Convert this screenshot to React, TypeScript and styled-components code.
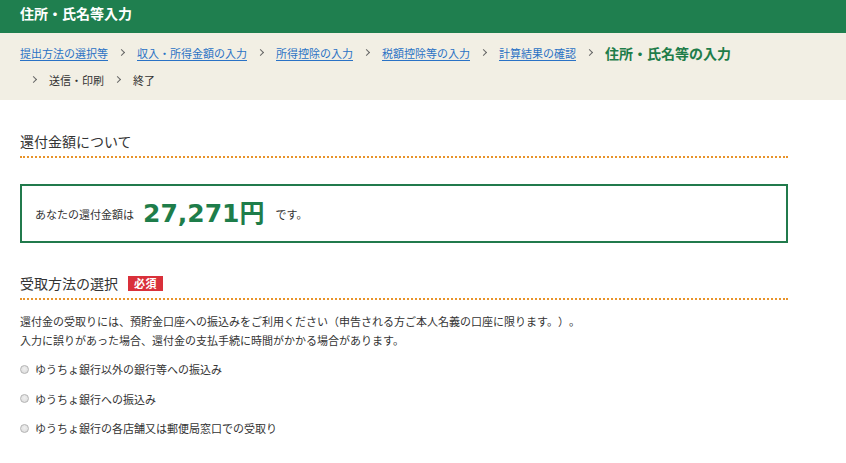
import React from "react";
import styled, { createGlobalStyle } from "styled-components";

const Global = createGlobalStyle`
  html, body { margin: 0; padding: 0; background: #fff; }
  body {
    font-family: "Noto Sans CJK JP", "Noto Sans", sans-serif;
    color: #333;
    text-spacing-trim: space-all;
  }
  * { box-sizing: border-box; }
`;

const Header = styled.header`
  height: 33px;
  background: #1f7f4f;
  padding: 3px 20px 0;
  color: #fff;
  font-size: 14px;
  font-weight: 700;
  line-height: 20px;
`;

const Crumbs = styled.nav`
  background: #f2efe4;
  padding: 6px 20px 7px;
`;

const CrumbList = styled.ol`
  list-style: none;
  margin: 0;
  padding: 0;
  width: 768px;
  display: flex;
  flex-wrap: wrap;
  align-items: center;
`;

const Crumb = styled.li<{ $first?: boolean; $current?: boolean }>`
  display: flex;
  align-items: center;
  height: 27px;
  font-size: ${(p) => (p.$current ? "14px" : "11px")};
  font-weight: ${(p) => (p.$current ? 700 : 400)};
  color: ${(p) => (p.$current ? "#1e7d4a" : "#333")};
  margin-left: ${(p) => (p.$first ? "0" : "11px")};
  &::before {
    content: "";
    display: ${(p) => (p.$first ? "none" : "block")};
    width: 4px;
    height: 4px;
    border-top: 1.6px solid #666;
    border-right: 1.6px solid #666;
    transform: rotate(45deg);
    margin-right: 13px;
  }
`;

const CrumbLink = styled.a`
  color: #2a72c5;
  text-decoration: underline;
  text-underline-offset: 2px;
`;

const Main = styled.main`
  padding: 0 20px 20px;
  width: 808px;
`;

const Heading = styled.h2<{ $top: number }>`
  margin: ${(p) => p.$top}px 0 0;
  padding-bottom: 5px;
  border-bottom: 2px dotted #e8932a;
  font-size: 14px;
  font-weight: 400;
  line-height: 20px;
  color: #333;
  display: flex;
  align-items: center;
`;

const Badge = styled.span`
  margin-left: 10px;
  background: #d9303a;
  color: #fff;
  font-size: 11px;
  font-weight: 700;
  line-height: 15px;
  height: 15px;
  padding: 0 6px;
  letter-spacing: 0.5px;
`;

const AmountBox = styled.div`
  margin-top: 26px;
  height: 59px;
  border: 2px solid #217a4c;
  padding: 0 13px;
  display: flex;
  align-items: center;
  font-size: 11px;
  color: #333;
`;

const Amount = styled.strong`
  font-family: "DejaVu Sans", "Noto Sans CJK JP", sans-serif;
  font-size: 25px;
  font-weight: 700;
  color: #1e7d4a;
  margin: 0 11px 0 9px;
  line-height: 1;
`;

const Para = styled.p`
  margin: 12px 0 0;
  font-size: 11px;
  line-height: 19px;
  color: #333;
`;

const Options = styled.div`
  margin-top: 9px;
  display: flex;
  flex-direction: column;
  gap: 9.5px;
`;

const Option = styled.label`
  display: flex;
  align-items: center;
  height: 20px;
  font-size: 11px;
  color: #333;
`;

const Radio = styled.input`
  appearance: none;
  width: 9px;
  height: 9px;
  margin: 0 6px 0 0;
  border-radius: 50%;
  border: 1px solid #b4b4b4;
  background: radial-gradient(circle at 50% 40%, #f0f0f0 0%, #d8d8d8 100%);
`;

const crumbs = [
  "提出方法の選択等",
  "収入・所得金額の入力",
  "所得控除の入力",
  "税額控除等の入力",
  "計算結果の確認",
];

export default function App() {
  return (
    <>
      <Global />
      <Header>住所・氏名等入力</Header>
      <Crumbs>
        <CrumbList>
          {crumbs.map((c, i) => (
            <Crumb key={c} $first={i === 0}>
              <CrumbLink href="#">{c}</CrumbLink>
            </Crumb>
          ))}
          <Crumb $current>住所・氏名等の入力</Crumb>
          <Crumb>送信・印刷</Crumb>
          <Crumb>終了</Crumb>
        </CrumbList>
      </Crumbs>
      <Main>
        <Heading $top={31}>還付金額について</Heading>
        <AmountBox>
          あなたの還付金額は<Amount>27,271円</Amount>です。
        </AmountBox>
        <Heading $top={30}>
          受取方法の選択<Badge>必須</Badge>
        </Heading>
        <Para>
          還付金の受取りには、預貯金口座への振込みをご利用ください（申告される方ご本人名義の口座に限ります。）。
          <br />
          入力に誤りがあった場合、還付金の支払手続に時間がかかる場合があります。
        </Para>
        <Options>
          <Option>
            <Radio type="radio" name="m" />
            ゆうちょ銀行以外の銀行等への振込み
          </Option>
          <Option>
            <Radio type="radio" name="m" />
            ゆうちょ銀行への振込み
          </Option>
          <Option>
            <Radio type="radio" name="m" />
            ゆうちょ銀行の各店舗又は郵便局窓口での受取り
          </Option>
        </Options>
      </Main>
    </>
  );
}
